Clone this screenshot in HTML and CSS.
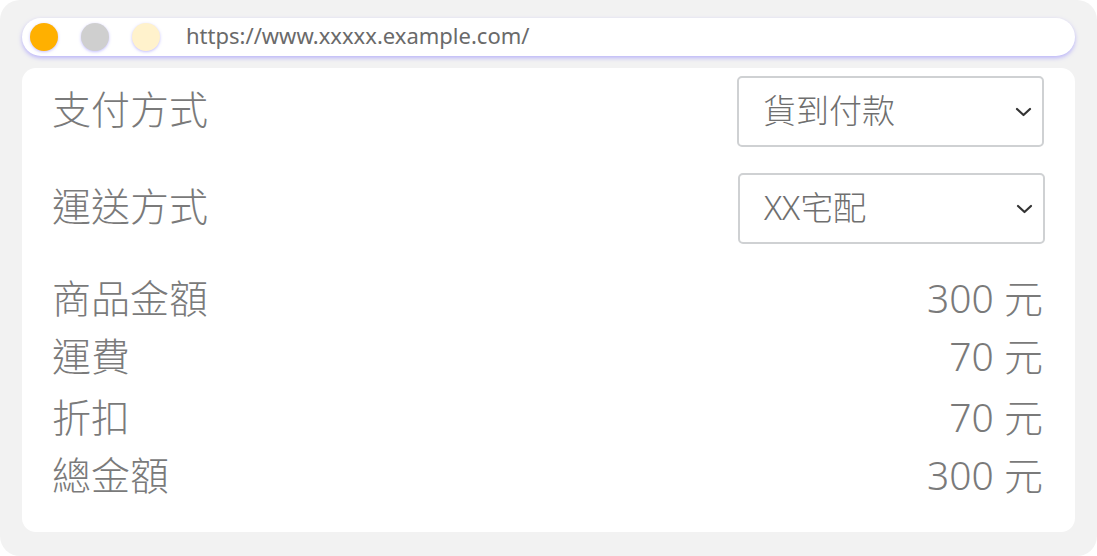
FILE: index.html
```html
<!DOCTYPE html>
<html lang="zh-Hant">

<head>
    <meta charset="UTF-8">
    <meta name="viewport" content="width=device-width, initial-scale=1.0">
    <title>結帳</title>
    <link rel="stylesheet" href="styles.css">
</head>

<body>
    <div class="frame">
        <div class="address-bar">
            <span class="dot dot-orange"></span>
            <span class="dot dot-gray"></span>
            <span class="dot dot-cream"></span>
            <span class="url">https://www.xxxxx.example.com/</span>
        </div>

        <div class="card">
            <div class="field-row">
                <span class="label">支付方式</span>
                <div class="select">
                    <span>貨到付款</span>
                    <svg class="chevron" width="17" height="10" viewBox="0 0 17 10">
                        <path d="M2 2 L8.5 8 L15 2" fill="none" stroke="#333" stroke-width="2.2" stroke-linecap="round" stroke-linejoin="round" />
                    </svg>
                </div>
            </div>

            <div class="field-row second">
                <span class="label">運送方式</span>
                <div class="select shifted">
                    <span>XX宅配</span>
                    <svg class="chevron" width="17" height="10" viewBox="0 0 17 10">
                        <path d="M2 2 L8.5 8 L15 2" fill="none" stroke="#333" stroke-width="2.2" stroke-linecap="round" stroke-linejoin="round" />
                    </svg>
                </div>
            </div>

            <div class="summary">
                <div class="summary-row"><span>商品金額</span><span>300 元</span></div>
                <div class="summary-row"><span>運費</span><span>70 元</span></div>
                <div class="summary-row"><span>折扣</span><span>70 元</span></div>
                <div class="summary-row"><span>總金額</span><span>300 元</span></div>
            </div>
        </div>
    </div>
</body>

</html>
```

FILE: styles.css
```css
* {
    box-sizing: border-box;
    margin: 0;
    padding: 0;
}

body {
    background: #fff;
    font-family: "Noto Sans", "Noto Sans CJK TC", sans-serif;
    font-weight: 300;
    color: #7a7a7a;
}

.frame {
    width: 1097px;
    height: 556px;
    background: #f2f2f2;
    border-radius: 20px;
    padding: 18px 22px 0 22px;
}

.address-bar {
    height: 38px;
    background: #fff;
    border-radius: 19px;
    box-shadow: 0 2px 4px rgba(140, 130, 255, 0.55);
    display: flex;
    align-items: center;
    padding-left: 8px;
}

.dot {
    width: 28px;
    height: 28px;
    border-radius: 50%;
    margin-right: 23px;
    box-shadow: 0 1px 3px rgba(140, 130, 255, 0.5);
}

.dot-orange {
    background: #ffb000;
}

.dot-gray {
    background: #cfcfcf;
}

.dot-cream {
    background: #fff2cc;
    margin-right: 26px;
}

.url {
    font-size: 22px;
    font-weight: 400;
    color: #6a6a6a;
    margin-top: -4px;
}

.card {
    margin-top: 12px;
    height: 464px;
    background: #fff;
    border-radius: 14px;
    padding: 8px 31px 0 30px;
}

.field-row {
    display: flex;
    justify-content: space-between;
    align-items: center;
    height: 71px;
}

.field-row.second {
    margin-top: 26px;
}

.label {
    font-size: 39px;
    margin-top: -9px;
}

.select {
    width: 307px;
    height: 71px;
    border: 2px solid #cfd1d3;
    border-radius: 5px;
    display: flex;
    justify-content: space-between;
    align-items: center;
    padding: 0 10px 5px 24px;
    font-size: 33px;
    color: #6f6f6f;
}

.select .chevron {
    margin-top: 5px;
}

.select.shifted {
    margin-right: -1px;
}

.chevron {
    display: block;
}

.summary {
    margin-top: 25px;
}

.summary-row {
    display: flex;
    justify-content: space-between;
    font-size: 39px;
    line-height: 58px;
    padding-right: 1px;
}

.summary-row:nth-child(3) {
    margin-top: 3px;
}
```
